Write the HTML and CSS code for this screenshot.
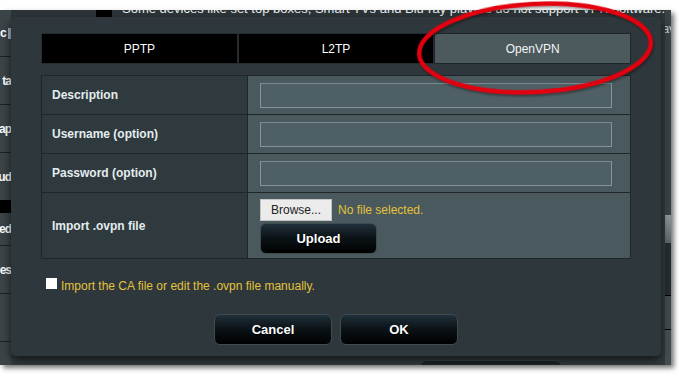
FILE: index.html
```html
<!DOCTYPE html>
<html lang="en">
<head>
  <meta charset="UTF-8" />
  <meta name="viewport" content="width=device-width, initial-scale=1.0" />
  <title>VPN Client - OpenVPN</title>
  <link rel="stylesheet" href="styles.css">
</head>
<body>

  <!-- Screenshot of the router page -->
  <div class="shot">
    <div class="page">
      <!-- Left menu (mostly hidden by the dialog) -->
      <ul class="side">
        <li>c<span class="side-bar"></span></li>
        <li>ta</li>
        <li>ap</li>
        <li>ud</li>
        <li class="side-head"></li>
        <li class="short">ed</li>
        <li>es</li>
        <li></li>
        <li></li>
      </ul>

      <div class="main">
        <div class="notice">
          <span class="notice-mark"></span>
          <span>Some devices like set top boxes, Smart TVs and Blu-ray players do not support VPN software.</span>
        </div>
        <div class="apply"></div>
      </div>

      <div class="edge">
        <div class="edge-text">av</div>
        <div class="edge-light"></div>
        <div class="edge-dark"></div>
        <div class="edge-row"></div>
        <div class="edge-rest"></div>
      </div>
    </div>

    <!-- Dialog -->
    <div class="modal">
      <div class="tabs">
        <div class="tab">PPTP</div>
        <div class="tab">L2TP</div>
        <div class="tab active">OpenVPN</div>
      </div>

      <div class="form">
        <div class="label">Description</div>
        <div class="value"><input type="text" class="field" /></div>

        <div class="label">Username (option)</div>
        <div class="value"><input type="text" class="field" /></div>

        <div class="label">Password (option)</div>
        <div class="value"><input type="password" class="field" /></div>

        <div class="label tall">Import .ovpn file</div>
        <div class="value tall">
          <div class="file">
            <div class="file-line">
              <button class="browse">Browse...</button>
              <span class="file-name">No file selected.</span>
            </div>
            <button class="btn upload">Upload</button>
          </div>
        </div>
      </div>

      <label class="manual">
        <input type="checkbox" class="check" />
        <span>Import the CA file or edit the .ovpn file manually.</span>
      </label>

      <div class="actions">
        <button class="btn">Cancel</button>
        <button class="btn">OK</button>
      </div>
    </div>
  </div>

  <!-- Red annotation ring -->
  <svg class="ring" width="679" height="378" viewBox="0 0 679 378">
    <ellipse cx="535" cy="48" rx="116" ry="44" transform="rotate(-3 535 48)" />
  </svg>

</body>
</html>
```

FILE: styles.css
```css
body {
  margin: 0;
  width: 679px;
  height: 378px;
  position: relative;
  overflow: hidden;
  background: #fff;
  font-family: "Liberation Sans", Arial, sans-serif;
  font-size: 12px;
  color: #fff;
}

/* Screenshot frame */
.shot {
  position: relative;
  margin-top: 10px;
  width: 671px;
  height: 355px;
  overflow: hidden;
  box-shadow: 3px 3px 5px rgba(0, 0, 0, 0.55);
}

.page {
  display: grid;
  grid-template-columns: 11px 1fr 10px;
  height: 100%;
  background: #333b3e;
}

/* Left menu */
.side {
  list-style: none;
  margin: 0;
  padding: 0;
  background: #3b4447;
  overflow: hidden;
}

.side li {
  display: flex;
  justify-content: flex-end;
  align-items: center;
  height: 47px;
  border-bottom: 1px solid #1b2124;
  font-size: 12px;
  font-weight: bold;
  letter-spacing: -1px;
  white-space: nowrap;
}

.side li:first-child {
  height: 46px;
  justify-content: flex-start;
}

.side li:nth-child(4) {
  border-bottom: 0;
}

.side-bar {
  display: inline-block;
  width: 3px;
  height: 11px;
  margin-left: 2px;
  background: #9fb4c4;
}

.side .side-head {
  height: 13px;
  background: #000;
  border-bottom: 0;
}

.side .short {
  height: 32px;
}

/* Main page content */
.main {
  display: flex;
  flex-direction: column;
  background: linear-gradient(#2d3437, #343c3f 30px);
}

.notice {
  display: flex;
  align-items: flex-start;
  margin-top: -9px;
  padding-left: 85px;
  font-size: 13px;
  line-height: 16px;
  color: #e6ecee;
  white-space: nowrap;
}

.notice-mark {
  width: 16px;
  height: 17px;
  margin-right: 10px;
  background: #000;
}

.apply {
  margin: auto 0 -17px 409px;
  width: 140px;
  height: 20px;
  border-radius: 6px;
  background: #1c2528;
  border: 1px solid #3c474a;
}

/* Right strip of the page */
.edge {
  display: flex;
  flex-direction: column;
  background: #394245;
}

.edge-text {
  display: flex;
  justify-content: flex-end;
  height: 193px;
  padding-top: 12px;
  line-height: 14px;
  color: #c9d1d4;
  overflow: hidden;
}

.edge-light {
  height: 28px;
  background: linear-gradient(#8d999c, #59666a);
}

.edge-dark {
  height: 52px;
  background: #252d30;
  border-bottom: 1px solid #000;
}

.edge-row {
  height: 33px;
  background: #414a4d;
  border-bottom: 1px solid #000;
}

.edge-rest {
  flex: 1;
  background: #454e51;
}

/* Dialog */
.modal {
  position: absolute;
  left: 11px;
  top: 7px;
  width: 650px;
  height: 339px;
  box-sizing: border-box;
  padding: 16px 30px 0;
  background: #2e373b;
  border-radius: 5px;
  box-shadow: 0 4px 10px rgba(0, 0, 0, 0.65);
}

.tabs {
  display: grid;
  grid-template-columns: 1fr 1fr 1fr;
  height: 31px;
}

.tab {
  display: flex;
  align-items: center;
  justify-content: center;
  background: #000;
  border: 1px solid #262d30;
  color: #fff;
}

.tab.active {
  background: #4c595d;
  border-color: #1f2629;
  color: #f2f5f6;
}

.form {
  display: grid;
  grid-template-columns: 206px 1fr;
  margin-top: 11px;
  border: 1px solid #1f2629;
  border-bottom: 0;
}

.label,
.value {
  display: flex;
  align-items: center;
  box-sizing: border-box;
  height: 39px;
  border-bottom: 1px solid #1f2629;
}

.label {
  padding-left: 10px;
  background: #2f3a3e;
  border-right: 1px solid #1f2629;
  font-weight: bold;
  color: #e4ecef;
}

.value {
  padding-left: 12px;
  background: #4a595d;
}

.label.tall,
.value.tall {
  height: 66px;
}

.field {
  width: 352px;
  height: 25px;
  box-sizing: border-box;
  margin: 0;
  background: #4f6064;
  border: 1px solid #84949a;
  border-top-color: #7a898d;
}

.file {
  display: flex;
  flex-direction: column;
  gap: 2px;
  margin-top: 1px;
}

.file-line {
  display: flex;
  align-items: center;
  gap: 6px;
}

.browse {
  width: 72px;
  height: 22px;
  margin: 0;
  padding: 0;
  font-family: inherit;
  font-size: 12px;
  color: #222;
  background: #ebebeb;
  border: 1px solid #c4c4c4;
}

.file-name {
  color: #e3c23c;
}

/* Dark buttons */
.btn {
  width: 118px;
  height: 31px;
  margin: 0;
  padding: 0;
  font-family: inherit;
  font-size: 13px;
  font-weight: bold;
  color: #fff;
  text-shadow: 0 1px 1px #000;
  background: linear-gradient(#20303a, #0c1418 45%, #000);
  border: 1px solid #404b4f;
  border-radius: 6px;
}

.upload {
  width: 117px;
}

.manual {
  display: flex;
  align-items: flex-start;
  gap: 4px;
  margin-top: 19px;
  padding-left: 5px;
  height: 14px;
  line-height: 14px;
  color: #e3c23c;
}

.manual span {
  padding-top: 1px;
}

.check {
  appearance: none;
  width: 11px;
  height: 11px;
  margin: 0;
  background: #fff;
  border: 0;
}

.actions {
  display: flex;
  justify-content: center;
  gap: 8px;
  margin-top: 22px;
}

/* Annotation */
.ring {
  position: absolute;
  top: 0;
  left: 0;
  pointer-events: none;
}

.ring ellipse {
  fill: none;
  stroke: #e3000f;
  stroke-width: 4.5;
  filter: drop-shadow(1px 2px 1px rgba(0, 0, 0, 0.35));
}
```
